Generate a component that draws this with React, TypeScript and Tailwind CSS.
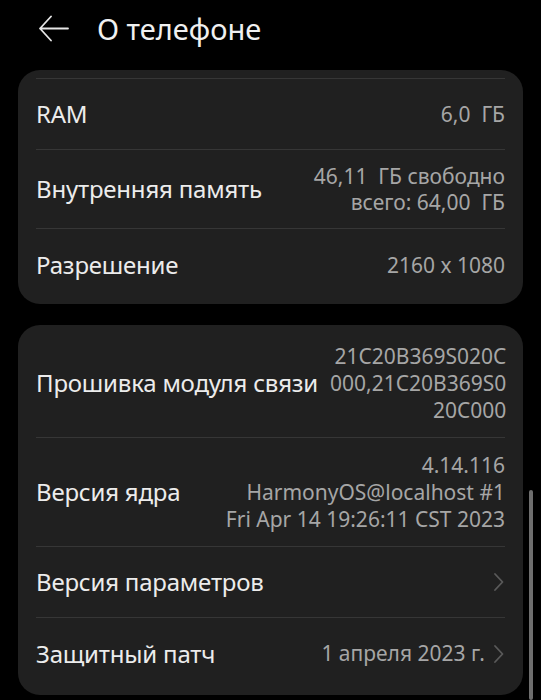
import React from "react";

type Row = {
	label: string;
	value?: string[];
	chevron?: boolean;
};

const groupOne: Row[] = [
	{ label: "RAM", value: ["6,0  ГБ"] },
	{ label: "Внутренняя память", value: ["46,11  ГБ свободно", "всего: 64,00  ГБ"] },
	{ label: "Разрешение", value: ["2160 x 1080"] },
];

const groupTwo: Row[] = [
	{
		label: "Прошивка модуля связи",
		value: ["21C20B369S020C", "000,21C20B369S0", "20C000"],
	},
	{
		label: "Версия ядра",
		value: ["4.14.116", "HarmonyOS@localhost #1", "Fri Apr 14 19:26:11 CST 2023"],
	},
	{ label: "Версия параметров", chevron: true },
	{ label: "Защитный патч", value: ["1 апреля 2023 г."], chevron: true },
];

const Chevron = () => (
	<svg width="12" height="22" viewBox="0 0 12 22" className="ml-2 shrink-0">
		<path d="M2 3 L9.5 11 L2 19" fill="none" stroke="#5a5a5a" strokeWidth="1.8" strokeLinecap="round" strokeLinejoin="round" />
	</svg>
);

const SettingRow = ({ row, last, tight }: { row: Row; last: boolean; tight?: boolean }) => (
	<div
		className={
			"flex min-h-[71px] items-center justify-between " +
			(tight ? "py-[13px] " : "py-[13.5px] ") +
			(last ? "" : "border-b border-[#363636]")
		}
	>
		<div className="shrink-0 pr-3 text-[24px] tracking-[-0.2px] text-[#ececec]">{row.label}</div>
		<div className="flex items-center">
			{row.value && (
				<div
					className={
						"flex flex-col items-end whitespace-pre text-right text-[21px] text-[#a6a6a6] " +
						(tight ? "leading-[26px]" : "leading-[27px]")
					}
				>
					{row.value.map((line) => (
						<span key={line}>{line}</span>
					))}
				</div>
			)}
			{row.chevron && <Chevron />}
		</div>
	</div>
);

export default function App() {
	return (
		<div className="relative h-[700px] w-[541px] overflow-hidden bg-black font-['Noto_Sans',sans-serif]">
			<div className="flex h-[70px] items-center pb-[12px] pl-[39px]">
				<svg width="31" height="28" viewBox="0 0 31 28">
					<path d="M12 1.5 L1 13.5 L12 25.5 M1 13.5 H29" fill="none" stroke="#e6e6e6" strokeWidth="1.8" strokeLinecap="round" strokeLinejoin="round" />
				</svg>
				<div className="ml-[27px] text-[29px] text-[#f0f0f0]">О телефоне</div>
			</div>

			<div className="flex flex-col gap-[21px] px-[18px]">
				<div className="rounded-[22px] bg-[#202020] px-[18px] pb-[4px] pt-[8px]">
					<div className="border-t border-[#363636]" />
					{groupOne.map((row, i) => (
						<SettingRow key={row.label} row={row} last={i === groupOne.length - 1} tight />
					))}
				</div>

				<div className="rounded-[22px] bg-[#202020] px-[18px] pb-[6px] pt-[4px]">
					{groupTwo.map((row, i) => (
						<SettingRow key={row.label} row={row} last={i === groupTwo.length - 1} />
					))}
				</div>
			</div>

			<div className="absolute right-[8px] top-[490px] h-[210px] w-[4px] rounded-full bg-[#6e6e6e]" />
		</div>
	);
}
